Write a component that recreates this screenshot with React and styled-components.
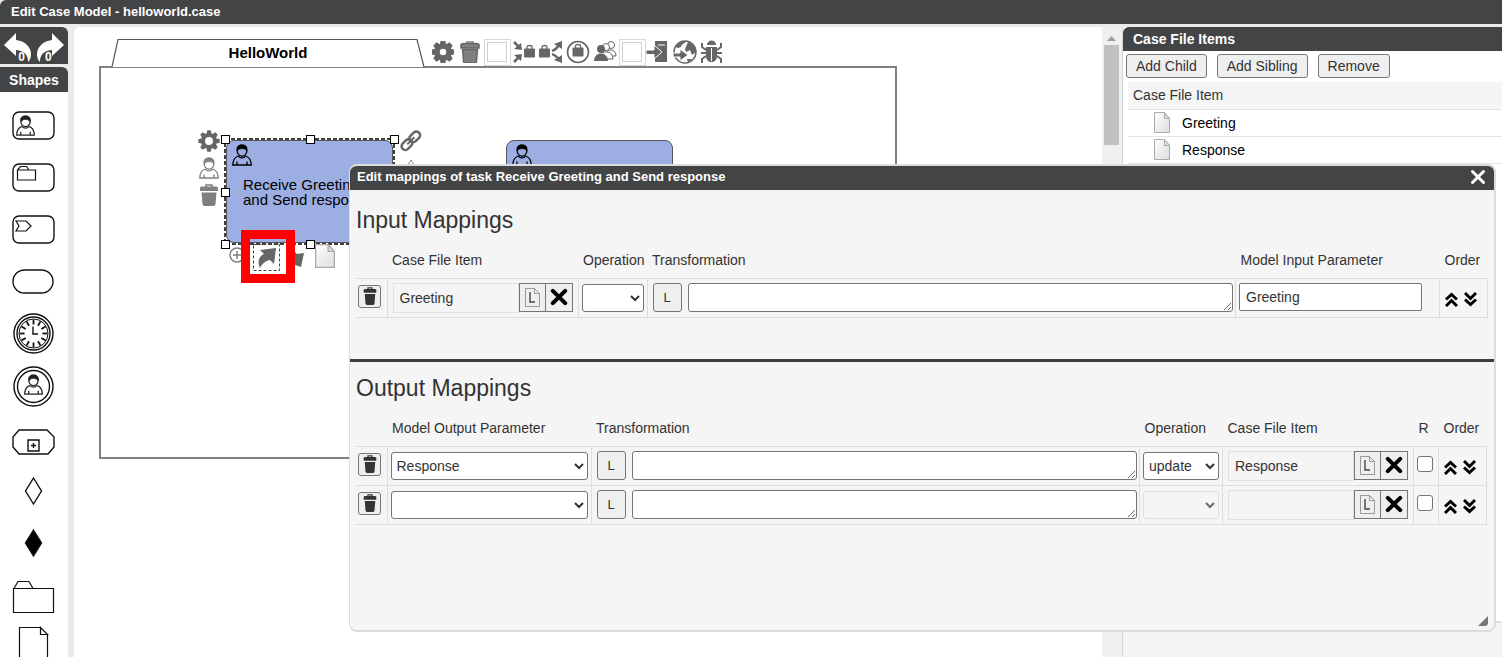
import React from "react";
import styled, { createGlobalStyle } from "styled-components";

const dark = "#434446";
const grey = "#666";

const GlobalStyle = createGlobalStyle`
  * { box-sizing: border-box; }
  html, body, #root { height: 100%; }
  body {
    margin: 0;
    overflow: hidden;
    background: #ebebeb;
    font-family: "Liberation Sans", Arial, sans-serif;
    font-size: 14px;
    color: #333;
  }
  button, input, select, textarea { font: inherit; color: inherit; }
  svg { display: block; flex: none; }
`;

/* ---------- page frame ---------- */

const Page = styled.div`
  position: relative;
  display: flex;
  flex-direction: column;
  gap: 3px;
  height: 100vh;
`;

const TitleBar = styled.header`
  height: 24px;
  padding: 0 11px;
  line-height: 24px;
  border-radius: 6px 0 0 0;
  background: ${dark};
  color: #fff;
  font-size: 13px;
  font-weight: bold;
`;

const Workspace = styled.div`
  display: flex;
  flex: 1;
  min-height: 0;
`;

const Sidebar = styled.aside`
  display: flex;
  flex-direction: column;
  gap: 3px;
  width: 68px;
  margin-right: 6px;
  overflow: hidden;
`;

const UndoBar = styled.div`
  display: flex;
  justify-content: center;
  gap: 4px;
  height: 37px;
  padding-top: 6px;
  border-radius: 0 6px 0 0;
  background: ${dark};
`;

const UndoButton = styled.button`
  position: relative;
  width: 28px;
  height: 30px;
  padding: 0;
  border: 0;
  background: none;
  color: #fff;
`;

const UndoCount = styled.span`
  position: absolute;
  bottom: -1px;
  ${(p) => (p.$side === "left" ? "left: 8px;" : "right: 6px;")}
  padding: 0 1px;
  font-size: 12px;
  font-weight: bold;
`;

const Palette = styled.section`
  flex: 1;
  min-height: 0;
  overflow: hidden;
  border-radius: 0 6px 0 0;
  background: #fff;
`;

const PaletteTitle = styled.h2`
  height: 25px;
  margin: 0 0 7px;
  background: ${dark};
  color: #fff;
  font-size: 14px;
  line-height: 26px;
  text-align: center;
`;

const ShapeButton = styled.button`
  display: block;
  height: 52px;
  padding: 0 0 0 11px;
  border: 0;
  background: none;
`;

/* ---------- case canvas ---------- */

const Canvas = styled.main`
  position: relative;
  flex: 1;
  min-width: 0;
  overflow: hidden;
  border-radius: 6px 0 0 0;
  background: #fff;
`;

const CasePlan = styled.div`
  position: absolute;
  left: 25px;
  top: 39px;
  width: 798px;
  height: 393px;
  border: 2px solid #808080;
`;

const PlanTab = styled.div`
  position: absolute;
  left: 10px;
  top: -30px;
  width: 314px;
  height: 29px;
`;

const PlanName = styled.span`
  position: absolute;
  inset: 0;
  line-height: 30px;
  text-align: center;
  font-size: 15px;
  font-weight: bold;
  color: #000;
`;

const PlanTools = styled.div`
  position: absolute;
  left: 329px;
  top: -29px;
  display: flex;
`;

const ToolButton = styled.button`
  display: block;
  width: 27px;
  height: 27px;
  padding: 0;
  border: 0;
  background: none;
`;

const TaskNode = styled.div`
  position: absolute;
  left: ${(p) => p.$x}px;
  top: ${(p) => p.$y}px;
  width: 167px;
  height: 103px;
  padding: 36px 16px 0;
  border: 1px solid #555;
  border-radius: 8px;
  background: #9daee2;
  color: #000;
  font-size: 15px;
  line-height: 15px;
  white-space: nowrap;
`;

const TaskMark = styled.span`
  position: absolute;
  left: 4px;
  top: 3px;
`;

const Selection = styled.div`
  position: absolute;
  inset: -2px -2px -2px -2px;
`;

const Outline = styled.svg`
  width: 100%;
  height: 100%;
  overflow: visible;
`;

const Handle = styled.i`
  position: absolute;
  left: ${(p) => p.$x}%;
  top: ${(p) => p.$y}%;
  width: 9px;
  height: 9px;
  margin: -4px;
  border: 1px solid #000;
  background: #fff;
`;

const Halo = styled.div`
  position: absolute;
  display: flex;
  flex-direction: ${(p) => p.$flow};
  gap: 4px;
  left: ${(p) => p.$x}px;
  top: ${(p) => p.$y}px;
`;

const HaloButton = styled.button`
  display: flex;
  justify-content: center;
  width: ${(p) => p.$w || 22}px;
  height: 23px;
  padding: 0;
  border: 0;
  background: none;
`;

const Highlight = styled.div`
  position: absolute;
  left: 167px;
  top: 203px;
  width: 54px;
  height: 53px;
  border: 9px solid #f00;
`;

const ScrollTrack = styled.div`
  width: 20px;
  padding: 8px 3px 0 2px;
  background: #f0f0f0;
`;

const ScrollThumb = styled.div`
  height: 100px;
  margin-top: 3px;
  background: #c1c1c1;
`;

/* ---------- case file panel ---------- */

const SidePanel = styled.aside`
  display: flex;
  flex-direction: column;
  width: 380px;
  border-left: 1px solid #d5d5d5;
  background: #f4f4f4;
`;

const CaseFile = styled.section`
  flex: 1;
  background: #fff;
  border-bottom: 2px solid #e4e4e4;
`;

const PanelFooter = styled.div`
  height: 34px;
`;

const PanelTitle = styled.h2`
  height: 24px;
  margin: 0;
  padding-left: 10px;
  border-radius: 6px 0 0 0;
  background: ${dark};
  color: #fff;
  font-size: 14px;
  line-height: 24px;
`;

const PanelActions = styled.div`
  display: flex;
  gap: 10px;
  padding: 3px 3px 4px;
`;

const PanelButton = styled.button`
  height: 24px;
  padding: 0 9px;
  border: 1px solid #767676;
  border-radius: 3px;
  background: #efefef;
  line-height: 20px;
`;

const FileTable = styled.table`
  width: calc(100% - 5px);
  margin-left: 5px;
  border-collapse: collapse;

  th {
    height: 27px;
    padding: 0 5px;
    background: #f5f5f5;
    font-weight: normal;
    text-align: left;
  }
  td {
    height: 27px;
    padding: 0 0 0 26px;
    border-top: 1px solid #e4e4e4;
    border-bottom: 1px solid #e4e4e4;
    color: #000;
  }
`;

const FileName = styled.span`
  display: flex;
  align-items: center;
  gap: 12px;
`;

/* ---------- mapping dialog ---------- */

const Dialog = styled.div`
  position: absolute;
  left: 349px;
  right: 6px;
  top: 164px;
  bottom: 25px;
  display: flex;
  flex-direction: column;
  overflow: hidden;
  border: 2px solid #dcdcdc;
  border-left-width: 1px;
  border-radius: 8px;
  background: #f5f5f5;
`;

const DialogTitle = styled.div`
  display: flex;
  justify-content: space-between;
  height: 24px;
  padding: 0 8px 0 7px;
  background: ${dark};
  color: #fff;
  font-size: 13px;
  font-weight: bold;
  line-height: 22px;
`;

const CloseButton = styled.button`
  display: flex;
  justify-content: center;
  width: 17px;
  padding: 3px 0 0;
  border: 0;
  background: none;
`;

const MappingSection = styled.section`
  padding: 0 5px;
  & + & {
    flex: 1;
    border-top: 3px solid #3c3e42;
  }
  &:first-of-type { height: 169px; }
`;

const SectionTitle = styled.h3`
  margin: 0;
  padding: ${(p) => p.$space}px 0 6px 1px;
  font-size: 23px;
  font-weight: normal;
  line-height: 32px;
`;

const MappingTable = styled.table`
  width: calc(100% - ${(p) => p.$inset}px);
  table-layout: fixed;
  border-collapse: collapse;

  th {
    height: 36px;
    padding: 0 0 0 5px;
    font-weight: normal;
    text-align: left;
    white-space: nowrap;
  }
  td {
    height: 39px;
    padding: 0 3px;
    border: 1px solid #dedede;
  }
  td:first-child { border-left: 0; }
`;

const Col = styled.col`
  width: ${(p) => (p.$w ? p.$w + "px" : "auto")};
`;

const Cell = styled.div`
  display: flex;
  align-items: center;
  gap: 6px;
  padding-left: ${(p) => p.$indent || 0}px;
`;

const TrashButton = styled.button`
  display: flex;
  align-items: center;
  justify-content: center;
  width: 23px;
  height: 23px;
  margin-bottom: 3px;
  padding: 0;
  border: 1px solid #767676;
  border-radius: 3px;
  background: #efefef;
`;

const ItemField = styled.div`
  display: flex;
  width: 180px;
  height: 30px;
`;

const ItemName = styled.span`
  flex: 1;
  padding-left: 6px;
  border: 1px solid #e1e1e1;
  line-height: 28px;
`;

const ItemButton = styled.button`
  display: flex;
  align-items: center;
  justify-content: center;
  width: 27px;
  height: 29px;
  padding: 0;
  border: 1px solid #767676;
  background: #efefef;
  & + & { margin-left: -1px; width: 28px; }
`;

const Select = styled.select`
  display: block;
  width: 100%;
  height: 28px;
  padding: 0 4px 0 1px;
  border: 1px solid #767676;
  border-radius: 3px;
  background: #fff;
  &:disabled {
    border-color: #d8d8d8;
    background: #f5f5f5;
  }
`;

const LangButton = styled.button`
  flex: none;
  width: 29px;
  height: 29px;
  padding: 0;
  border: 1px solid #767676;
  border-radius: 3px;
  background: #efefef;
  font-size: 13px;
`;

const Expression = styled.textarea`
  flex: 1;
  min-width: 0;
  height: 29px;
  margin-right: -1px;
  border: 1px solid #767676;
  border-radius: 3px;
  background: #fff;
`;

const ParamInput = styled.input`
  display: block;
  width: 183px;
  height: 28px;
  margin-bottom: 2px;
  padding: 0 6px;
  border: 1px solid #767676;
  border-radius: 2px;
  background: #fff;
`;

const Check = styled.input`
  flex: none;
  width: 16px;
  height: 16px;
  margin: 0 0 3px;
  appearance: none;
  border: 1px solid #767676;
  border-radius: 3px;
  background: #fff;
`;

const OrderButton = styled.button`
  width: 13px;
  height: 17px;
  margin-top: 3px;
  padding: 0;
  border: 0;
  background: none;
`;

const ResizeGrip = styled.svg`
  position: absolute;
  right: 5px;
  bottom: 3px;
`;

/* ---------- drawings ---------- */

const Person = ({ color = "#222", size = 22 }) => (
  <svg width={size} height={size} viewBox="0 0 22 22" fill="none" stroke={color} strokeWidth="1.300">
    <ellipse cx="11" cy="7" rx="4.800" ry="5.200" />
    <path d="M6.200 7C5 2.500 8 .8 11 .8s6 1.700 4.800 6.200C14.500 4.800 12 4.600 11 4.600S7.500 4.800 6.200 7z" fill={color} strokeWidth=".8" />
    <path d="M7.500 12C4 13 2 15 1.800 21h4.200v-3.500V21h10v-3.500V21h4.200c-.2-6-2.200-8-5.700-9M7.500 12c1.500 2.500 5.500 2.500 7 0" />
  </svg>
);

const Gear = ({ size = 22 }) => (
  <svg width={size} height={size} viewBox="0 0 22 22">
    <g fill={grey}>
      {[0, 45, 90, 135].map((a) => (
        <path key={a} d="M9.300.3h3.400l1 4v13.400l-1 4H9.300l-1-4V4.300z" transform={`rotate(${a} 11 11)`} />
      ))}
      <circle cx="11" cy="11" r="7.800" />
    </g>
    <circle cx="11" cy="11" r="4" fill="#fff" />
  </svg>
);

const Trash = ({ color = "#808080", w = 20, h = 22 }) => (
  <svg width={w} height={h} viewBox="0 0 20 22" preserveAspectRatio="none">
    <path d="M7 3V1h6v2" fill="none" stroke={color} strokeWidth="1.600" />
    <path d="M1 4c0-1 1-1.500 3-1.500h12c2 0 3 .5 3 1.500v3H1z" fill={color} />
    <path d="M2.500 8.500h15L16.500 20c0 1-1 2-2 2h-9c-1 0-2-1-2-2z" fill={color} />
  </svg>
);

const Doc = ({ w = 16, h = 21 }) => (
  <svg width={w} height={h} viewBox="0 0 16 21" preserveAspectRatio="none">
    <defs>
      <linearGradient id="paper" x1="0" y1="0" x2="1" y2="1">
        <stop offset="0" stopColor="#fff" />
        <stop offset="1" stopColor="#dcdcdc" />
      </linearGradient>
    </defs>
    <path d="M.5.5h10l5 6v14H.5z" fill="url(#paper)" stroke="#aaa" />
    <path d="M10.500.5v6h5z" fill="#ddd" stroke="#aaa" />
  </svg>
);

const Cross = ({ color = "#000", size = 16, weight = 3.6 }) => (
  <svg width={size} height={size} viewBox="0 0 16 16">
    <path d="M2.500 2.500l11 11M13.500 2.500l-11 11" stroke={color} strokeWidth={weight} strokeLinecap="round" />
  </svg>
);

const Chevrons = ({ down }) => (
  <svg width="13" height="17" viewBox="0 0 13 17" fill="none" stroke="#000" strokeWidth="3">
    <g transform={down ? "rotate(180 6.500 8.500)" : undefined}>
      <path d="M1 8.500l5.500-5L12 8.500M1 15l5.500-5.500L12 15" />
    </g>
  </svg>
);

const DocL = () => (
  <svg width="15" height="19" viewBox="0 0 15 19" fill="none">
    <path d="M.5.5h9l5 5v13H.5z" stroke="#999" />
    <path d="M9.500.5v5h5" stroke="#999" />
    <path d="M5 4v10h5" stroke="#444" strokeWidth="1.400" />
  </svg>
);

const UndoArrow = ({ flip }) => (
  <svg width="28" height="30" viewBox="0 0 28 30">
    <path
      d="M0 12L12 0v7c10 1 15 8 15 14 0 4-1 6-3 8 0-7-3-11-12-12v6z"
      fill="#fff"
      transform={flip ? "translate(28 0) scale(-1 1)" : undefined}
    />
  </svg>
);

const Bag = ({ x, y }) => (
  <g transform={`translate(${x} ${y})`}>
    <path d="M3 4V2C3 0 8 0 8 2v2" fill="none" stroke={grey} strokeWidth="1.300" />
    <rect width="11" height="9" y="3.500" fill={grey} rx="1" stroke="none" />
  </g>
);

const ToolIcon = ({ children }) => (
  <svg width="27" height="27" viewBox="0 0 27 27" fill="none" stroke={grey} strokeWidth="1.500">
    {children}
  </svg>
);

const BlankIcon = () => (
  <ToolIcon>
    <rect x="0.500" y="0.500" width="26" height="26" stroke="#d8d8d8" strokeWidth="1" />
    <rect x="3.500" y="3.500" width="19" height="19" stroke="#d0d0d0" strokeWidth="1" />
  </ToolIcon>
);

const planTools = [
  ["Settings", <ToolIcon key="i"><g transform="translate(2 2)"><Gear /></g></ToolIcon>],
  ["Delete", <ToolIcon key="i"><g transform="translate(3 2)"><Trash /></g></ToolIcon>],
  ["Input blank", <BlankIcon key="i" />],
  ["Input parameters", (
    <ToolIcon key="i">
      <Bag x={13} y={6} />
      <path d="M3 3l5 5M3 23l5-5" strokeWidth="2.500" />
      <path d="M11 11l-8-1 7-6zM11 15l-8 1 7 6z" fill={grey} stroke="none" />
    </ToolIcon>
  )],
  ["Output parameters", (
    <ToolIcon key="i">
      <Bag x={1} y={6} />
      <path d="M14 12c3-1 5-3 7-6M14 15c3 1 5 3 7 5" strokeWidth="2.300" />
      <path d="M24 2v8l-8-5zM24 24v-8l-8 5z" fill={grey} stroke="none" />
    </ToolIcon>
  )],
  ["Start schema", (
    <ToolIcon key="i">
      <circle cx="13" cy="13" r="10.500" strokeWidth="1.600" />
      <Bag x={7.500} y={5} />
    </ToolIcon>
  )],
  ["Case team", (
    <ToolIcon key="i">
      <circle cx="19" cy="6" r="3.500" strokeWidth="1" />
      <path d="M15 13c3-4 9-2 9 4h-6" fill="#fff" strokeWidth="1" />
      <circle cx="14" cy="8" r="3.500" fill="#fff" strokeWidth="1" />
      <path d="M11 14c4-3 10 0 10 6h-7" fill="#fff" strokeWidth="1" />
      <circle cx="9" cy="10" r="4" fill={grey} stroke="none" />
      <path d="M2 22c0-10 14-10 14 0z" fill={grey} stroke="none" />
    </ToolIcon>
  )],
  ["Team blank", <BlankIcon key="i" />],
  ["Deploy", (
    <ToolIcon key="i">
      <path d="M9 2h12v21H9z" fill={grey} stroke="none" />
      <path d="M12 6h7" stroke="#fff" strokeWidth="1" />
      <path d="M0 11h8V6l8 7-8 7v-4.500H0z" fill={grey} stroke="#fff" strokeWidth="1" />
    </ToolIcon>
  )],
  ["Run", (
    <ToolIcon key="i">
      <circle cx="12" cy="13" r="11" />
      <path d="M3 7c3-4 6-5 10-5-1 3-3 2-4 4s-2 3-5 3zM12 10l3-7c5 1 8 5 8 10l-4 3-2-5-4 2zM14 20l5 0-4 4z" fill={grey} stroke="none" />
      <path d="M0 14h7v-4l8 6-8 6v-4H0z" fill={grey} stroke="#fff" strokeWidth="1" />
    </ToolIcon>
  )],
  ["Debug", (
    <ToolIcon key="i">
      <path d="M7 6c0-6 9-6 9 0z" fill={grey} stroke="none" />
      <path d="M6 8h11v9c0 8-11 8-11 0z" fill={grey} stroke="none" />
      <path d="M11.500 9v13" stroke="#fff" strokeWidth="1" />
      <path d="M6 11L2 8V4M17 11l4-3V4M6 14H1M17 14h5M6 17l-4 3v4M17 17l4 3v4" strokeWidth="2" />
    </ToolIcon>
  )],
];

const ShapeIcon = ({ children }) => (
  <svg width="44" height="52" viewBox="0 0 44 52" fill="none" stroke="#111" strokeWidth="1.400">
    {children}
  </svg>
);

const ShapeBox = () => <rect x="2" y="13" width="41" height="27" rx="6" />;

const shapes = [
  ["Human task", <ShapeIcon key="s"><ShapeBox /><g transform="translate(4 16)"><Person size={21} /></g></ShapeIcon>],
  ["Case task", <ShapeIcon key="s"><ShapeBox /><path d="M6.500 29V19l3-3.500h6l2.500 3.500h6.500v10zM6.500 19H18" strokeWidth="1.200" /></ShapeIcon>],
  ["Process task", <ShapeIcon key="s"><ShapeBox /><path d="M5 18h10l5 5-5 5H5l3-5z" strokeWidth="1.200" /></ShapeIcon>],
  ["Milestone", <ShapeIcon key="s"><rect x="2" y="15" width="40" height="23" rx="11.500" /></ShapeIcon>],
  ["Timer event", (
    <ShapeIcon key="s">
      <circle cx="22.500" cy="26.500" r="19.500" />
      <circle cx="22.500" cy="26.500" r="16.500" />
      <circle cx="22.500" cy="26.500" r="14.500" strokeWidth="1" />
      {[...Array(12)].map((_, i) => (
        <path key={i} d="M22.500 12.500v5" strokeWidth="1.800" transform={`rotate(${i * 30} 22.500 26.500)`} />
      ))}
      <path d="M22 19.500v7.500h5" />
    </ShapeIcon>
  )],
  ["User event", (
    <ShapeIcon key="s">
      <circle cx="22.500" cy="27.500" r="19.500" />
      <circle cx="22.500" cy="27.500" r="16" />
      <g transform="translate(12 15)"><Person size={21} /></g>
    </ShapeIcon>
  )],
  ["Stage", (
    <ShapeIcon key="s">
      <path d="M8 19h28l7 7v10l-6 7H8l-6-7V26z" />
      <path d="M17 29h11v11H17zM22.500 32v5M20 34.500h5" />
    </ShapeIcon>
  )],
  ["Entry criterion", <ShapeIcon key="s"><path d="M22.500 15l8 13-8 13-8-13z" /></ShapeIcon>],
  ["Exit criterion", <ShapeIcon key="s"><path d="M22.500 15l8 13-8 13-8-13z" fill="#000" /></ShapeIcon>],
  ["Case folder", <ShapeIcon key="s"><path d="M2.500 21.500h40v24h-40zM3 21.500l4-7h11l4 7" strokeWidth="1.200" /></ShapeIcon>],
  ["Text document", <ShapeIcon key="s"><path d="M8.500 8.500h21l7 7v33h-28zM29.500 8.500v7h7z" strokeWidth="1.200" /></ShapeIcon>],
];

const LinkIcon = () => (
  <svg width="24" height="24" viewBox="0 0 24 24" fill="none" stroke={grey} strokeWidth="2.500">
    <g transform="rotate(-45 12 12)">
      <rect x="0.500" y="8" width="12" height="7.500" rx="3.700" />
      <rect x="11.500" y="8" width="12" height="7.500" rx="3.700" />
      <path d="M7 11.800h10" strokeWidth="2" />
    </g>
  </svg>
);

/* ---------- composed parts ---------- */

const points = [[0, 0], [50, 0], [100, 0], [0, 50], [100, 50], [0, 100], [50, 100], [100, 100]];

function SelectedTask() {
  return (
    <TaskNode $x={152} $y={113}>
      <TaskMark><Person color="#000" /></TaskMark>
      Receive Greeting<br />and Send response
      <Selection>
        <Outline>
          <rect width="100%" height="100%" fill="none" stroke="#000" strokeWidth="1.500" strokeDasharray="4 2" />
        </Outline>
        {points.map(([x, y]) => <Handle key={`${x}-${y}`} $x={x} $y={y} />)}
      </Selection>
      <Halo $flow="column" $x={-29} $y={-11}>
        <HaloButton aria-label="Task settings"><Gear /></HaloButton>
        <HaloButton aria-label="Assign"><Person color="#808080" /></HaloButton>
        <HaloButton aria-label="Delete task"><Trash /></HaloButton>
      </Halo>
      <Halo $flow="column" $x={172} $y={-12}>
        <HaloButton $w={24} aria-label="Link"><LinkIcon /></HaloButton>
        <HaloButton $w={24} aria-label="Criterion">
          <svg width="24" height="22" viewBox="0 0 24 22" fill="none" stroke="#888">
            <path d="M12 4l6 9-6 9-6-9z" />
          </svg>
        </HaloButton>
      </Halo>
      <Halo $flow="row" $x={0} $y={103}>
        <HaloButton aria-label="Add">
          <svg width="22" height="22" viewBox="0 0 22 22" fill="none" stroke="#808080" strokeWidth="1.500">
            <circle cx="10" cy="11" r="7" />
            <path d="M6 11h8M10 7v8" />
          </svg>
        </HaloButton>
        <HaloButton $w={28} aria-label="Mappings">
          <svg width="28" height="28" viewBox="0 0 28 28">
            <rect x="0.500" y="0.500" width="26" height="26" fill="none" stroke="#444" strokeDasharray="3 2" />
            <path d="M7 6l16-2-2 16-4-4c-5 1-8 4-10 8-3-6-1-12 4-14z" fill={grey} />
          </svg>
        </HaloButton>
        <HaloButton $w={26} aria-label="Transfer">
          <svg width="26" height="24" viewBox="0 0 26 24">
            <path d="M2 6c4-1 7 0 10 4l7-1-3 14-9-3 3-3C9 12 6 8 2 8z" fill={grey} />
          </svg>
        </HaloButton>
        <HaloButton $w={20} aria-label="Document"><Doc w={20} h={24} /></HaloButton>
      </Halo>
    </TaskNode>
  );
}

const ItemPicker = ({ value }) => (
  <Cell $indent={2}>
    <ItemField>
      <ItemName>{value}</ItemName>
      <ItemButton aria-label="Choose case file item"><DocL /></ItemButton>
      <ItemButton aria-label="Clear case file item"><Cross size={18} /></ItemButton>
    </ItemField>
  </Cell>
);

const DeleteCell = () => (
  <TrashButton aria-label="Delete mapping"><Trash color="#333" w={14} h={18} /></TrashButton>
);

const TransformCell = () => (
  <Cell $indent={2}>
    <LangButton aria-label="Language">L</LangButton>
    <Expression aria-label="Transformation" />
  </Cell>
);

const OrderCell = () => (
  <Cell $indent={2}>
    <OrderButton aria-label="Move up"><Chevrons /></OrderButton>
    <OrderButton aria-label="Move down"><Chevrons down /></OrderButton>
  </Cell>
);

function OutputRow({ param, operation, item, disabled }) {
  return (
    <tr>
      <td><DeleteCell /></td>
      <td>
        <Select aria-label="Model output parameter" defaultValue={param}>
          <option>{param}</option>
        </Select>
      </td>
      <td><TransformCell /></td>
      <td>
        <Select aria-label="Operation" disabled={disabled} defaultValue={operation}>
          <option>{operation}</option>
        </Select>
      </td>
      <td><ItemPicker value={item} /></td>
      <td><Cell><Check type="checkbox" aria-label="Required" /></Cell></td>
      <td><OrderCell /></td>
    </tr>
  );
}

export default function App() {
  return (
    <Page>
      <GlobalStyle />
      <TitleBar>Edit Case Model - helloworld.case</TitleBar>
      <Workspace>
        <Sidebar>
          <UndoBar>
            <UndoButton aria-label="Undo"><UndoArrow /><UndoCount $side="right">0</UndoCount></UndoButton>
            <UndoButton aria-label="Redo"><UndoArrow flip /><UndoCount $side="left">0</UndoCount></UndoButton>
          </UndoBar>
          <Palette>
            <PaletteTitle>Shapes</PaletteTitle>
            {shapes.map(([name, icon]) => (
              <ShapeButton key={name} aria-label={name}>{icon}</ShapeButton>
            ))}
          </Palette>
        </Sidebar>

        <Canvas>
          <CasePlan>
            <PlanTab>
              <svg width="314" height="29" viewBox="0 0 314 29">
                <path d="M1 29L7 1.500h299l7 27.500" fill="#fff" stroke="#555" strokeWidth="1.200" />
              </svg>
              <PlanName>HelloWorld</PlanName>
            </PlanTab>
            <PlanTools>
              {planTools.map(([name, icon]) => (
                <ToolButton key={name} aria-label={name}>{icon}</ToolButton>
              ))}
            </PlanTools>
          </CasePlan>
          <SelectedTask />
          <TaskNode $x={432} $y={113}>
            <TaskMark><Person color="#000" /></TaskMark>
          </TaskNode>
          <Highlight />
        </Canvas>

        <ScrollTrack>
          <svg width="15" height="7" viewBox="0 0 15 7">
            <path d="M3 6l4.500-5L12 6z" fill="#a0a0a0" />
          </svg>
          <ScrollThumb />
        </ScrollTrack>

        <SidePanel>
          <CaseFile>
            <PanelTitle>Case File Items</PanelTitle>
            <PanelActions>
              <PanelButton>Add Child</PanelButton>
              <PanelButton>Add Sibling</PanelButton>
              <PanelButton>Remove</PanelButton>
            </PanelActions>
            <FileTable>
              <thead><tr><th>Case File Item</th></tr></thead>
              <tbody>
                {["Greeting", "Response"].map((name) => (
                  <tr key={name}>
                    <td><FileName><Doc />{name}</FileName></td>
                  </tr>
                ))}
              </tbody>
            </FileTable>
          </CaseFile>
          <PanelFooter />
        </SidePanel>
      </Workspace>

      <Dialog role="dialog" aria-label="Edit mappings">
        <DialogTitle>
          Edit mappings of task Receive Greeting and Send response
          <CloseButton aria-label="Close"><Cross color="#fff" size={16} weight={3} /></CloseButton>
        </DialogTitle>

        <MappingSection>
          <SectionTitle $space={14}>Input Mappings</SectionTitle>
          <MappingTable $inset={1}>
            <colgroup>
              <Col $w={32} /><Col $w={191} /><Col $w={69} /><Col /><Col $w={204} /><Col $w={48} />
            </colgroup>
            <thead>
              <tr>
                <th />
                <th>Case File Item</th>
                <th>Operation</th>
                <th>Transformation</th>
                <th>Model Input Parameter</th>
                <th>Order</th>
              </tr>
            </thead>
            <tbody>
              <tr>
                <td><DeleteCell /></td>
                <td><ItemPicker value="Greeting" /></td>
                <td><Select aria-label="Operation"><option /></Select></td>
                <td><TransformCell /></td>
                <td><ParamInput aria-label="Model input parameter" defaultValue="Greeting" /></td>
                <td><OrderCell /></td>
              </tr>
            </tbody>
          </MappingTable>
        </MappingSection>

        <MappingSection>
          <SectionTitle $space={10}>Output Mappings</SectionTitle>
          <MappingTable $inset={2}>
            <colgroup>
              <Col $w={32} /><Col $w={204} /><Col /><Col $w={83} /><Col $w={191} /><Col $w={25} /><Col $w={48} />
            </colgroup>
            <thead>
              <tr>
                <th />
                <th>Model Output Parameter</th>
                <th>Transformation</th>
                <th>Operation</th>
                <th>Case File Item</th>
                <th>R</th>
                <th>Order</th>
              </tr>
            </thead>
            <tbody>
              <OutputRow param="Response" operation="update" item="Response" />
              <OutputRow param="" operation="" item="" disabled />
            </tbody>
          </MappingTable>
        </MappingSection>

        <ResizeGrip width="11" height="11" viewBox="0 0 11 11">
          <path d="M0 10L10 0v8l-2 2z" fill="#777" />
        </ResizeGrip>
      </Dialog>
    </Page>
  );
}
